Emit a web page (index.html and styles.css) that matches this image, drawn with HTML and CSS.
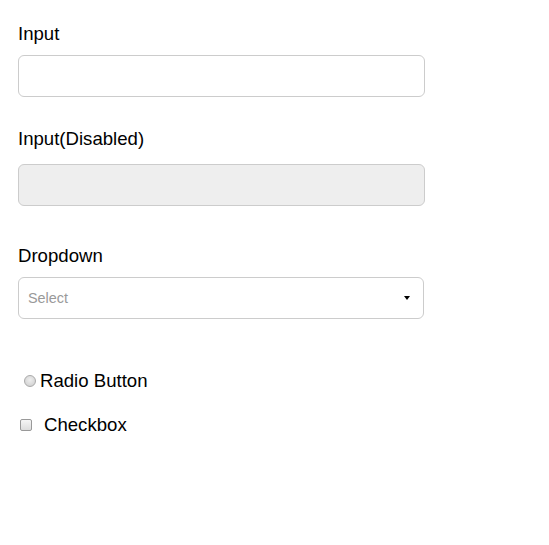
FILE: index.html
```html
<!DOCTYPE html>
<html>
<head>
<meta charset="utf-8">
<link rel="stylesheet" href="styles.css">
</head>
<body>
<div class="form">
  <label class="label l1">Input</label>
  <input class="field" type="text">
  <label class="label l2">Input(Disabled)</label>
  <input class="field" type="text" disabled>
  <label class="label l3">Dropdown</label>
  <div class="field select">
    <span class="placeholder">Select</span>
    <span class="caret"></span>
  </div>
  <div class="radio-row">
    <span class="radio"></span>
    <span class="opt">Radio Button</span>
  </div>
  <div class="check-row">
    <span class="check"></span>
    <span class="opt">Checkbox</span>
  </div>
</div>
</body>
</html>
```
FILE: styles.css
```css
html, body {
  margin: 0;
  padding: 0;
  background: #fff;
}
body {
  font-family: "Liberation Sans", Arial, sans-serif;
  color: #000;
}
.form {
  display: flex;
  flex-direction: column;
  align-items: flex-start;
  padding: 24px 18px 0 18px;
}
.label {
  display: block;
  font-size: 18.6px;
  line-height: 20px;
  height: 20px;
}
.l1 { margin-bottom: 11px; }
.l2 { margin-top: 32px; margin-bottom: 15px; }
.l3 { margin-top: 40px; margin-bottom: 11px; }
.field {
  box-sizing: border-box;
  width: 407px;
  height: 42px;
  border: 1px solid #ccc;
  border-radius: 6px;
  background: #fff;
  margin: 0;
  padding: 0 10px;
  font-family: inherit;
  font-size: 14px;
  outline: none;
}
.field:disabled {
  background: #eee;
}
.select {
  display: flex;
  align-items: center;
  justify-content: space-between;
  padding: 0 13px 0 9px;
  width: 406px;
}
.placeholder {
  color: #999;
  font-size: 14.4px;
}
.caret {
  width: 0;
  height: 0;
  border-left: 3.5px solid transparent;
  border-right: 3.5px solid transparent;
  border-top: 4px solid #000;
}
.radio-row {
  display: flex;
  align-items: center;
  margin-top: 52px;
  height: 20px;
}
.radio {
  box-sizing: border-box;
  width: 12px;
  height: 12px;
  border-radius: 50%;
  border: 1px solid #aaa;
  background: radial-gradient(circle at 50% 40%, #eee, #ccc);
  margin-left: 6px;
  margin-right: 4px;
}
.opt {
  font-size: 18.6px;
  line-height: 20px;
}
.check-row {
  display: flex;
  align-items: center;
  margin-top: 24px;
  height: 20px;
}
.check {
  box-sizing: border-box;
  width: 12px;
  height: 12px;
  border-radius: 2px;
  border: 1px solid #999;
  background: linear-gradient(#f6f6f6, #ddd);
  margin-left: 2px;
  margin-right: 12px;
}
```
